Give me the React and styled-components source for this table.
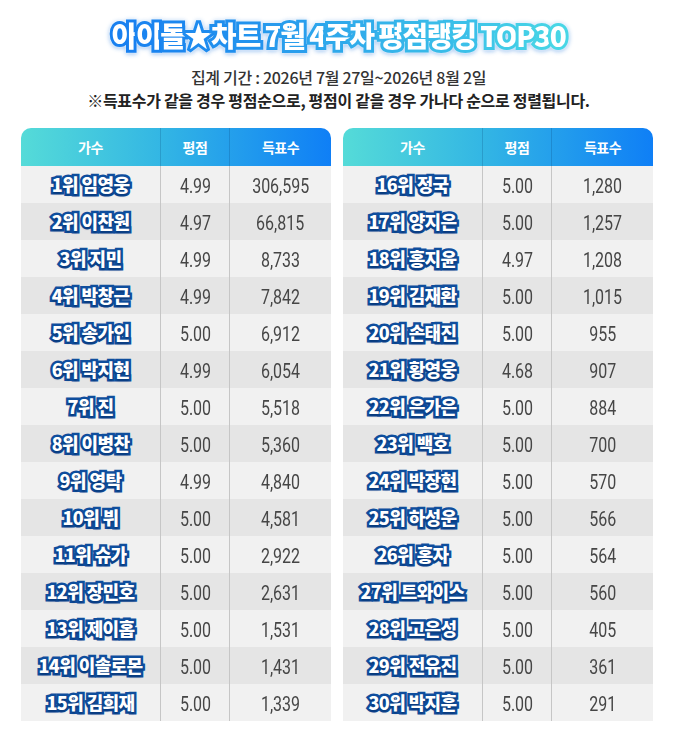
import React from 'react';
import styled, { createGlobalStyle } from 'styled-components';

const GlobalStyle = createGlobalStyle`
  body {
    margin: 0;
    background: #fff;
    font-family: "Noto Sans CJK KR", "Noto Sans", sans-serif;
  }
`;

const Page = styled.div`
  width: 677px;
  min-height: 739px;
  padding-top: 18px;
  box-sizing: border-box;
`;

const Title = styled.h1`
  margin: 0;
  text-align: center;
  font-size: 28px;
  line-height: 34px;
  font-weight: 900;
  letter-spacing: -1.5px;
  color: #fff;
  filter: drop-shadow(0 0 1px #fff) drop-shadow(0 1px 2px rgba(20, 110, 220, 0.45));
`;

const TitleChar = styled.span`
  -webkit-text-stroke: 6px ${(p) => p.$stroke};
  paint-order: stroke fill;
`;

const Info = styled.div`
  margin-top: 14px;
  text-align: center;
  font-size: 16px;
  line-height: 23px;
  letter-spacing: -0.3px;
`;

const InfoLine = styled.div`
  font-weight: ${(p) => (p.$strong ? 700 : 500)};
  color: ${(p) => (p.$strong ? '#222' : '#333')};
`;

const Tables = styled.div`
  display: flex;
  gap: 12px;
  padding-left: 21px;
  margin-top: 16px;
`;

const Table = styled.div`
  width: 310px;
`;

const cols = '139px 69px 102px';

const Head = styled.div`
  display: grid;
  grid-template-columns: ${cols};
  height: 38px;
  border-radius: 10px 10px 0 0;
  background: linear-gradient(90deg, #55dbd8 0%, #33b6e4 45%, #0f7ff6 100%);
`;

const HeadCell = styled.div`
  display: flex;
  align-items: center;
  justify-content: center;
  color: #fff;
  font-size: 14px;
  font-weight: 700;
  letter-spacing: -0.5px;
  border-left: ${(p) => (p.$first ? 'none' : '1px solid rgba(0, 40, 90, 0.18)')};
`;

const Row = styled.div`
  display: grid;
  grid-template-columns: ${cols};
  height: 37px;
  background: ${(p) => (p.$alt ? '#e5e5e5' : '#f1f1f1')};
`;

const NameCell = styled.div`
  display: flex;
  align-items: center;
  justify-content: center;
  padding-bottom: 2px;
  color: #fff;
  font-size: 18px;
  font-weight: 900;
  letter-spacing: -0.6px;
  -webkit-text-stroke: 5px #0f4e9d;
  paint-order: stroke fill;
  text-shadow: 0 2px 2px rgba(0, 30, 80, 0.45);
  white-space: nowrap;
`;

const NumCell = styled.div`
  display: flex;
  align-items: center;
  justify-content: center;
  padding-top: 3px;
  border-left: 1px solid #c6c6c6;
  color: #464646;
`;

const Num = styled.span`
  display: inline-block;
  font-family: Roboto, "Liberation Sans", sans-serif;
  font-size: 20px;
  transform: scaleX(0.8);
`;

const left = [
  ['1위 임영웅', '4.99', '306,595'],
  ['2위 이찬원', '4.97', '66,815'],
  ['3위 지민', '4.99', '8,733'],
  ['4위 박창근', '4.99', '7,842'],
  ['5위 송가인', '5.00', '6,912'],
  ['6위 박지현', '4.99', '6,054'],
  ['7위 진', '5.00', '5,518'],
  ['8위 이병찬', '5.00', '5,360'],
  ['9위 영탁', '4.99', '4,840'],
  ['10위 뷔', '5.00', '4,581'],
  ['11위 슈가', '5.00', '2,922'],
  ['12위 장민호', '5.00', '2,631'],
  ['13위 제이홉', '5.00', '1,531'],
  ['14위 이솔로몬', '5.00', '1,431'],
  ['15위 김희재', '5.00', '1,339'],
];

const right = [
  ['16위 정국', '5.00', '1,280'],
  ['17위 양지은', '5.00', '1,257'],
  ['18위 홍지윤', '4.97', '1,208'],
  ['19위 김재환', '5.00', '1,015'],
  ['20위 손태진', '5.00', '955'],
  ['21위 황영웅', '4.68', '907'],
  ['22위 은가은', '5.00', '884'],
  ['23위 백호', '5.00', '700'],
  ['24위 박장현', '5.00', '570'],
  ['25위 하성운', '5.00', '566'],
  ['26위 홍자', '5.00', '564'],
  ['27위 트와이스', '5.00', '560'],
  ['28위 고은성', '5.00', '405'],
  ['29위 전유진', '5.00', '361'],
  ['30위 박지훈', '5.00', '291'],
];

const titleText = '아이돌★차트 7월 4주차 평점랭킹 TOP30';

// blend blue -> cyan along the title
function strokeAt(i, n) {
  const a = [24, 128, 240];
  const b = [72, 214, 230];
  const t = n > 1 ? i / (n - 1) : 0;
  const c = a.map((v, k) => Math.round(v + (b[k] - v) * t));
  return `rgb(${c[0]}, ${c[1]}, ${c[2]})`;
}

function RankTable({ rows }) {
  return (
    <Table>
      <Head>
        <HeadCell $first>가수</HeadCell>
        <HeadCell>평점</HeadCell>
        <HeadCell>득표수</HeadCell>
      </Head>
      {rows.map(([name, score, votes], i) => (
        <Row key={name} $alt={i % 2 === 1}>
          <NameCell>{name}</NameCell>
          <NumCell><Num>{score}</Num></NumCell>
          <NumCell><Num>{votes}</Num></NumCell>
        </Row>
      ))}
    </Table>
  );
}

export default function App() {
  const chars = [...titleText];
  return (
    <Page>
      <GlobalStyle />
      <Title>
        {chars.map((ch, i) => (
          <TitleChar key={i} $stroke={strokeAt(i, chars.length)}>{ch}</TitleChar>
        ))}
      </Title>
      <Info>
        <InfoLine>집계 기간 : 2026년 7월 27일~2026년 8월 2일</InfoLine>
        <InfoLine $strong>※득표수가 같을 경우 평점순으로, 평점이 같을 경우 가나다 순으로 정렬됩니다.</InfoLine>
      </Info>
      <Tables>
        <RankTable rows={left} />
        <RankTable rows={right} />
      </Tables>
    </Page>
  );
}
